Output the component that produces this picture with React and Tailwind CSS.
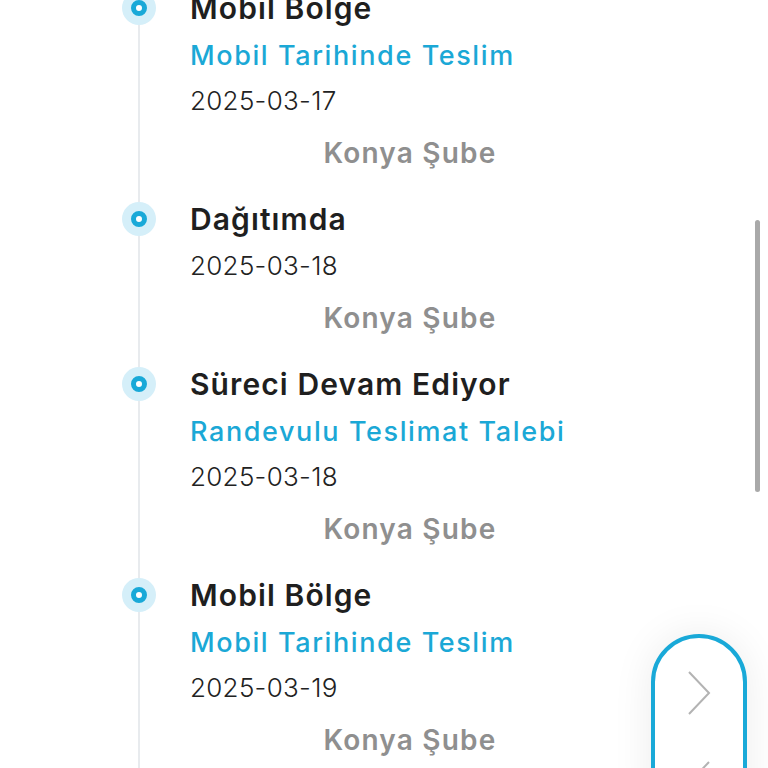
import React from 'react';

const events = [
  { title: 'Mobil Bölge', note: 'Mobil Tarihinde Teslim', date: '2025-03-17', branch: 'Konya Şube' },
  { title: 'Dağıtımda', date: '2025-03-18', branch: 'Konya Şube' },
  { title: 'Süreci Devam Ediyor', note: 'Randevulu Teslimat Talebi', date: '2025-03-18', branch: 'Konya Şube' },
  { title: 'Mobil Bölge', note: 'Mobil Tarihinde Teslim', date: '2025-03-19', branch: 'Konya Şube' },
  { title: 'Dağıtımda', date: '2025-03-20', branch: 'Konya Şube' },
];

const Dot = () => (
  <div className="absolute -left-[18px] top-[8px] w-[34px] h-[34px] rounded-full bg-[#d5eff9] flex items-center justify-center">
    <div className="w-[16px] h-[16px] rounded-full border-[5px] border-[#19a9d8] bg-white" />
  </div>
);

const App = () => {
  return (
    <div className="relative h-[768px] overflow-hidden bg-white font-['Inter',sans-serif]">
      {/* Timeline */}
      <div className="-mt-[17px] ml-[138px] border-l-2 border-[#e8ebee] flex flex-col">
        {events.map((ev, index) => (
          <div key={index} className="relative pl-[50px] pb-[9px] w-[490px] flex flex-col">
            <Dot />
            <div className="h-[50px] flex items-center text-[30px] font-semibold text-[#1f1f1f] tracking-[1.1px]">
              {ev.title}
            </div>
            {ev.note && (
              <div className="h-[46px] flex items-center text-[27px] font-medium text-[#1ba8d6] tracking-[1.6px]">
                {ev.note}
              </div>
            )}
            <div className="h-[42px] flex items-center text-[26px] font-light text-[#222] tracking-[0.3px]">
              {ev.date}
            </div>
            <div className="h-[64px] flex items-center justify-center text-[28px] font-semibold text-[#8f8f8f] tracking-[1.2px]">
              {ev.branch}
            </div>
          </div>
        ))}
      </div>

      {/* Scrollbar */}
      <div className="absolute left-[755px] top-[220px] w-[5px] h-[272px] rounded-full bg-[#a9a9a9]" />

      {/* Floating nav */}
      <div className="absolute left-[651px] top-[634px] w-[96px] h-[200px] rounded-full border-[4px] border-[#19a9d8] bg-white shadow-[0_0_40px_rgba(0,0,0,0.08)] flex flex-col items-center pt-[30px] gap-[40px]">
        <svg width="28" height="50" viewBox="0 0 28 50" fill="none" stroke="#b3b3b3" strokeWidth="2">
          <path d="M4 4 L24 25 L4 46" />
        </svg>
        <svg width="28" height="50" viewBox="0 0 28 50" fill="none" stroke="#b3b3b3" strokeWidth="2">
          <path d="M24 4 L4 25 L24 46" />
        </svg>
      </div>
    </div>
  );
};

export default App;
